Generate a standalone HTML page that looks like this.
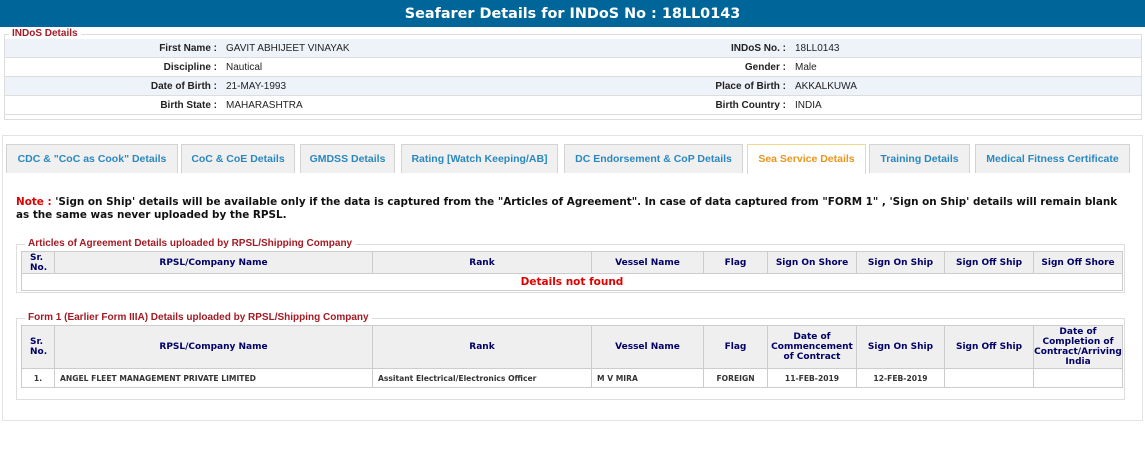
<!DOCTYPE html>
<html><head><style>
*{margin:0;padding:0;box-sizing:border-box}
body{width:1145px;height:456px;background:#fff;position:relative;font-family:"Liberation Sans",Arial,sans-serif;overflow:hidden}
.a{position:absolute}
.hdr{left:0;top:0;width:1145px;height:27px;background:#006699;color:#fff;font:bold 14.4px "DejaVu Sans",sans-serif;text-align:center;line-height:28px}
.fs{border:1px solid #ddd}
.lg{background:#fff;color:#a31b24;padding:0 3px;font-size:10px;font-weight:bold}
.row{left:5px;width:1136px;height:19px;border-bottom:1px solid #ddd;font-size:10px;color:#222}
.row.b{background:#eef3fa}
.row span{position:absolute;top:4px}
.tab{top:144px;height:29px;border:1px solid #d3d3d3;border-bottom:none;background:#f0f0f0;color:#2a88bf;font:bold 10.5px "Liberation Sans",sans-serif;text-align:center;line-height:28px}
.note{left:16px;top:196px;width:1104px;font:bold 10.4px "DejaVu Sans",Verdana,sans-serif;line-height:13px;color:#111}
table{position:absolute;border-collapse:collapse;font:bold 9px "DejaVu Sans",Verdana,sans-serif;table-layout:fixed}
th{background:#efefef;color:#000066;border:1px solid #ccc;font-size:9px;line-height:10px;text-align:center}
td{border:1px solid #ccc;color:#333;font-size:7.6px;height:19px}
.lg2{background:#fff;color:#a31b24;padding:0 3px;font-size:10px;font-weight:bold}
</style></head><body>
<div class="a hdr">Seafarer Details for INDoS No : 18LL0143</div>
<div class="a fs" style="left:4px;top:34px;width:1138px;height:86px"></div>
<div class="a lg" style="left:9px;top:28px">INDoS Details</div>
<div class="a row b" style="top:39px"><span style="right:924px;font-weight:bold">First Name :</span><span style="left:221px">GAVIT ABHIJEET VINAYAK</span><span style="right:355px;font-weight:bold">INDoS No. :</span><span style="left:790px">18LL0143</span></div>
<div class="a row" style="top:58px"><span style="right:924px;font-weight:bold">Discipline :</span><span style="left:221px">Nautical</span><span style="right:355px;font-weight:bold">Gender :</span><span style="left:790px">Male</span></div>
<div class="a row b" style="top:77px"><span style="right:924px;font-weight:bold">Date of Birth :</span><span style="left:221px">21-MAY-1993</span><span style="right:355px;font-weight:bold">Place of Birth :</span><span style="left:790px">AKKALKUWA</span></div>
<div class="a row" style="top:96px"><span style="right:924px;font-weight:bold">Birth State :</span><span style="left:221px">MAHARASHTRA</span><span style="right:355px;font-weight:bold">Birth Country :</span><span style="left:790px">INDIA</span></div>

<div class="a" style="left:2px;top:135px;width:1141px;height:286px;border:1px solid #e3e3e3"></div>
<div class="a tab" style="left:6px;width:172px">CDC &amp; "CoC as Cook" Details</div>
<div class="a tab" style="left:181px;width:114px">CoC &amp; CoE Details</div>
<div class="a tab" style="left:300px;width:95px">GMDSS Details</div>
<div class="a tab" style="left:401px;width:157px">Rating [Watch Keeping/AB]</div>
<div class="a tab" style="left:564px;width:179px">DC Endorsement &amp; CoP Details</div>
<div class="a tab" style="left:747px;width:119px;background:#fff;border-color:#f3d98b;color:#e8951c;height:30px">Sea Service Details</div>
<div class="a tab" style="left:869px;width:101px">Training Details</div>
<div class="a tab" style="left:975px;width:155px">Medical Fitness Certificate</div>

<div class="a note"><span style="color:#e00000">Note :</span> 'Sign on Ship' details will be available only if the data is captured from the "Articles of Agreement". In case of data captured from "FORM 1" , 'Sign on Ship' details will remain blank<br>as the same was never uploaded by the RPSL.</div>

<div class="a fs" style="left:16px;top:244px;width:1109px;height:49px"></div>
<div class="a lg2" style="left:25px;top:238px">Articles of Agreement Details uploaded by RPSL/Shipping Company</div>
<table style="left:21px;top:251px;width:1101px">
<colgroup><col style="width:33px"><col style="width:318px"><col style="width:219px"><col style="width:112px"><col style="width:64px"><col style="width:89px"><col style="width:88px"><col style="width:89px"><col style="width:89px"></colgroup>
<tr style="height:22px"><th style="text-align:left;padding-left:8px">Sr.<br>No.</th><th>RPSL/Company Name</th><th>Rank</th><th>Vessel Name</th><th>Flag</th><th>Sign On Shore</th><th>Sign On Ship</th><th>Sign Off Ship</th><th>Sign Off Shore</th></tr>
<tr><td colspan="9" style="text-align:center;color:#e00000;font-size:10.5px;height:17px">Details not found</td></tr>
</table>

<div class="a fs" style="left:16px;top:318px;width:1109px;height:82px"></div>
<div class="a lg2" style="left:25px;top:312px">Form 1 (Earlier Form IIIA) Details uploaded by RPSL/Shipping Company</div>
<table style="left:21px;top:325px;width:1101px">
<colgroup><col style="width:33px"><col style="width:318px"><col style="width:219px"><col style="width:112px"><col style="width:64px"><col style="width:89px"><col style="width:88px"><col style="width:89px"><col style="width:89px"></colgroup>
<tr style="height:43px"><th style="text-align:left;padding-left:8px">Sr.<br>No.</th><th>RPSL/Company Name</th><th>Rank</th><th>Vessel Name</th><th>Flag</th><th>Date of Commencement of Contract</th><th>Sign On Ship</th><th>Sign Off Ship</th><th>Date of Completion of Contract/Arriving India</th></tr>
<tr><td style="text-align:center">1.</td><td style="padding-left:5px">ANGEL FLEET MANAGEMENT PRIVATE LIMITED</td><td style="padding-left:5px">Assitant Electrical/Electronics Officer</td><td style="padding-left:5px">M V MIRA</td><td style="text-align:center">FOREIGN</td><td style="text-align:center">11-FEB-2019</td><td style="text-align:center">12-FEB-2019</td><td></td><td></td></tr>
</table>
</body></html>
